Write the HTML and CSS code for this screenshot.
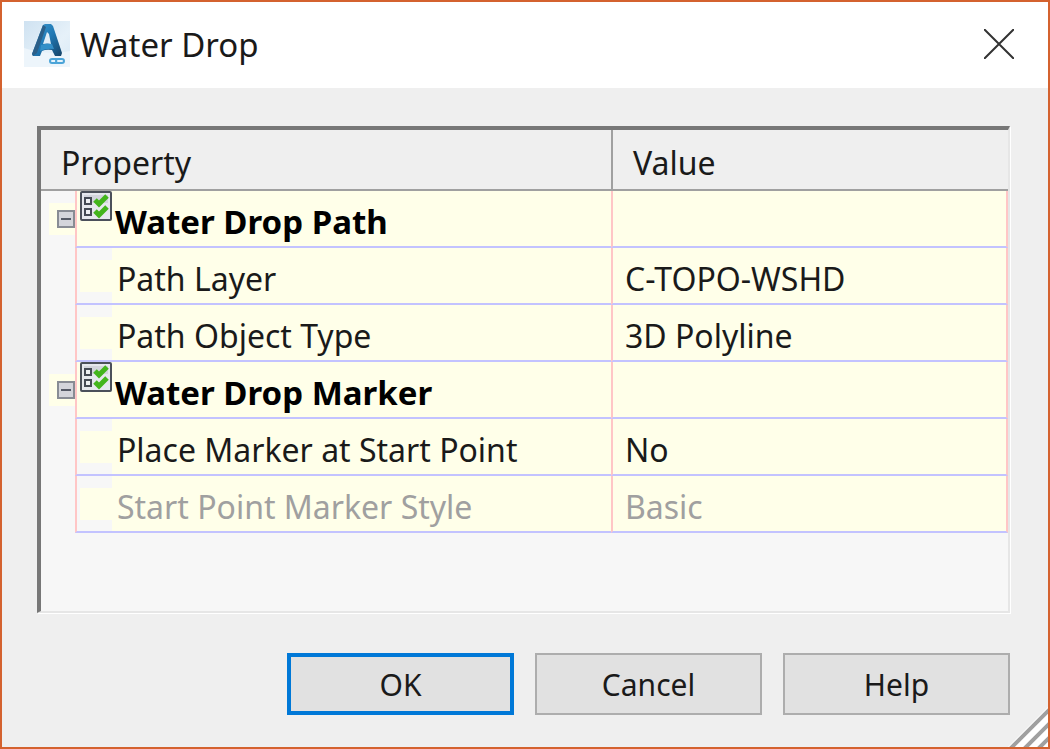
FILE: index.html
```html
<!DOCTYPE html>
<html lang="en">
<head>
  <meta charset="UTF-8">
  <title>Water Drop</title>
  <meta name="viewport" content="width=device-width, initial-scale=1">
  <link rel="stylesheet" href="styles.css">
</head>
<body>
<svg class="symbols" aria-hidden="true">
  <symbol id="checklist" viewBox="0 0 32 30">
    <rect x="1" y="1" width="30" height="28" rx="1" fill="#e6e8ee" stroke="#4b505a" stroke-width="2"/>
    <path d="M4 4h24v8H4z" fill="#d3d5dd"/>
    <path d="M5 7h6v6H5zM5 18h6v6H5z" fill="#eef0f4" stroke="#454a55" stroke-width="2"/>
    <path d="M15 9l4 4 8-8M15 20l4 4 8-8" fill="none" stroke="#43b51c" stroke-width="5"/>
  </symbol>
</svg>
<main class="dialog">
  <header class="title-bar">
    <svg class="logo" viewBox="0 0 46 46" aria-hidden="true">
      <defs>
        <linearGradient id="tile" x1="0" y1="0" x2="1" y2="1">
          <stop offset="0" stop-color="#cfe2f1"/>
          <stop offset=".6" stop-color="#e6f1f9"/>
          <stop offset="1" stop-color="#d8e9f5"/>
        </linearGradient>
        <linearGradient id="blade" x1="0" y1="0" x2="1" y2="1">
          <stop offset="0" stop-color="#3f9bd0"/>
          <stop offset=".5" stop-color="#1f78b4"/>
          <stop offset="1" stop-color="#174468"/>
        </linearGradient>
      </defs>
      <rect width="46" height="46" fill="url(#tile)"/>
      <path d="M0 27q24 8 46 3v16H0z" fill="#edf5fb"/>
      <path fill-rule="evenodd" d="M19 4l2-1h6l2 2 9 27-1 3h-6l-3-6q-6-1-10 1l-2 5H9l-1-2zM23 11l-4 12q4-1 8 0l-2-10z" fill="url(#blade)"/>
      <path d="M19 4l3 2-9 26-4 3-1-2z" fill="#2c5f88"/>
      <path d="M17 24q6-2 11-1l2 5q-7-1-14 2z" fill="#3490c8"/>
      <rect x="26" y="38" width="8" height="4" rx="2" fill="#e5f3fc" stroke="#4ba4d8" stroke-width="2"/>
      <rect x="32" y="38" width="8" height="4" rx="2" fill="#e5f3fc" stroke="#4ba4d8" stroke-width="2"/>
    </svg>
    <h1>Water Drop</h1>
    <button class="close" type="button" aria-label="Close">
      <svg viewBox="0 0 30 30" aria-hidden="true"><path d="M0 0l30 30M30 0L0 30"/></svg>
    </button>
  </header>

  <section class="content">
    <div class="panel">
      <table>
        <colgroup>
          <col class="col-gutter">
          <col class="col-name">
          <col class="col-value">
        </colgroup>
        <thead>
          <tr>
            <th colspan="2" scope="col">Property</th>
            <th scope="col">Value</th>
          </tr>
        </thead>
        <tbody>
          <tr class="group">
            <td class="gutter"><button class="toggle" type="button" aria-label="Collapse"></button></td>
            <th class="name" scope="row"><div><span class="slot"><svg><use href="#checklist"/></svg></span>Water Drop Path</div></th>
            <td class="value"></td>
          </tr>
          <tr>
            <td class="gutter"></td>
            <td class="name"><div><span class="slot"></span>Path Layer</div></td>
            <td class="value">C-TOPO-WSHD</td>
          </tr>
          <tr>
            <td class="gutter"></td>
            <td class="name"><div><span class="slot"></span>Path Object Type</div></td>
            <td class="value">3D Polyline</td>
          </tr>
          <tr class="group">
            <td class="gutter"><button class="toggle" type="button" aria-label="Collapse"></button></td>
            <th class="name" scope="row"><div><span class="slot"><svg><use href="#checklist"/></svg></span>Water Drop Marker</div></th>
            <td class="value"></td>
          </tr>
          <tr>
            <td class="gutter"></td>
            <td class="name"><div><span class="slot"></span>Place Marker at Start Point</div></td>
            <td class="value">No</td>
          </tr>
          <tr class="disabled">
            <td class="gutter"></td>
            <td class="name"><div><span class="slot"></span>Start Point Marker Style</div></td>
            <td class="value">Basic</td>
          </tr>
        </tbody>
      </table>
    </div>

    <footer class="actions">
      <button class="btn btn-default" type="button">OK</button>
      <button class="btn" type="button">Cancel</button>
      <button class="btn" type="button">Help</button>
    </footer>
  </section>

  <svg class="grip" viewBox="0 0 40 40" aria-hidden="true">
    <path class="grip-base" d="M0 40L40 0v40z"/>
    <path d="M2 42L42 2M16 42L42 16M30 42L42 30"/>
  </svg>
</main>
</body>
</html>
```

FILE: styles.css
```css
:root {
    --face: #efefef;
    --blank: #f7f7f7;
    --cell: #ffffe9;
    --rule: #c3c3ff;
    --edge: #ffc6c6;
}

*,
*::before {
    box-sizing: border-box;
}

body {
    margin: 0;
    font-family: "Noto Sans", "Open Sans", sans-serif;
    font-size: 32px;
    color: #1a1a1a;
}

button {
    font: inherit;
    color: inherit;
    padding: 0;
}

.symbols {
    position: absolute;
    width: 0;
    height: 0;
}

.dialog {
    position: relative;
    display: flex;
    flex-direction: column;
    min-height: 100vh;
    border: 2px solid #d4622f;
    background: var(--face);
}

.title-bar {
    display: flex;
    align-items: center;
    gap: 10px;
    height: 86px;
    padding: 0 33px 2px 22px;
    background: #fff;
}

.logo {
    width: 46px;
    height: 46px;
}

.title-bar h1 {
    flex: 1;
    margin: 0;
    font-size: 33px;
    font-weight: 400;
}

.close {
    width: 32px;
    height: 32px;
    border: 0;
    background: none;
}

.close svg {
    display: block;
    width: 30px;
    height: 30px;
    margin: auto;
    fill: none;
    stroke: #333;
    stroke-width: 2;
}

.content {
    flex: 1;
    display: flex;
    flex-direction: column;
    gap: 40px;
    padding: 38px 38px 32px 35px;
}

/* sunken list box */
.panel {
    flex: 1;
    border: 4px solid;
    border-width: 4px 2px 2px 4px;
    border-color: #777 #e6e6e6 #e6e6e6 #777;
    background: var(--blank);
    box-shadow: 1px 1px 0 #fff;
}

table {
    width: 100%;
    table-layout: fixed;
    border-collapse: separate;
    border-spacing: 0;
}

.col-gutter {
    width: 34px;
}

.col-name {
    width: 536px;
}

th,
td {
    padding: 0;
    text-align: left;
    white-space: nowrap;
}

thead th {
    height: 61px;
    padding: 5px 20px 0;
    font-weight: 400;
    background: var(--face);
    border-bottom: 2px solid #a0a0a0;
}

thead th + th {
    border-left: 2px solid #a0a0a0;
}

tbody td,
tbody th {
    height: 57px;
}

.gutter {
    padding: 12px 0 0 8px;
    vertical-align: top;
}

.toggle {
    display: block;
    width: 26px;
    height: 32px;
    border: 0;
    background: var(--cell);
}

.toggle::before {
    content: "";
    display: block;
    width: 18px;
    height: 18px;
    margin-left: 8px;
    border: 2px solid #888c94;
    background: linear-gradient(#555a66, #555a66) center / 10px 2px no-repeat, #d4d5db;
}

.name {
    border-left: 2px solid var(--edge);
    border-bottom: 2px solid var(--rule);
}

.name div {
    display: flex;
    align-items: center;
    height: 55px;
    padding: 6px 0 0 40px;
    background: linear-gradient(var(--cell), var(--cell)) 35px 0 no-repeat;
    position: relative;
}

.slot {
    position: absolute;
    left: 3px;
    top: 12px;
    width: 32px;
    height: 32px;
    background: var(--cell);
}

.group .name div {
    padding-left: 38px;
    background: var(--cell);
    color: #000;
    font-size: 33px;
}

.group .slot {
    top: 0;
}

.slot svg {
    display: block;
    width: 32px;
    height: 30px;
}

.value {
    padding: 6px 0 0 12px;
    border: 2px solid;
    border-color: transparent var(--edge) var(--rule) var(--edge);
    border-top: 0;
    background: var(--cell);
}

.disabled {
    color: #a0a0a0;
}

.actions {
    display: flex;
    justify-content: flex-end;
    gap: 21px;
}

.btn {
    width: 227px;
    height: 62px;
    border: 2px solid #adadad;
    background: #e1e1e1;
    font-size: 30px;
}

.btn-default {
    border: 4px solid #0078d7;
}

.grip {
    position: absolute;
    right: 0;
    bottom: 0;
    width: 40px;
    height: 40px;
}

.grip path {
    fill: none;
    stroke: #a0a0a0;
    stroke-width: 4;
}

.grip .grip-base {
    fill: #fff;
    stroke: none;
}
```
